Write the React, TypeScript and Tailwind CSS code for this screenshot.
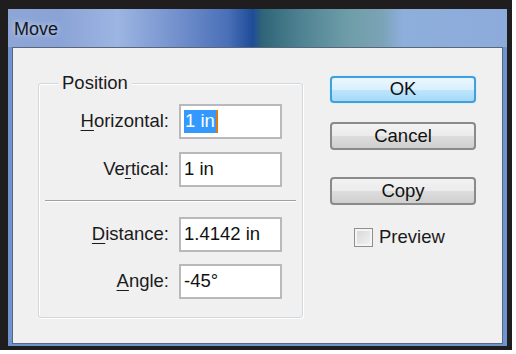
import React from "react";

const font = { fontFamily: '"Liberation Sans", Arial, sans-serif' };

function Mnemonic({ before, letter, after }: { before?: string; letter: string; after: string }) {
  return (
    <span>
      {before}
      <span className="underline underline-offset-[3px] decoration-1">{letter}</span>
      {after}
    </span>
  );
}

function Row({ label, children }: { label: React.ReactNode; children: React.ReactNode }) {
  return (
    <div className="flex items-center h-[35px]">
      <div className="w-[131px] text-right pr-[1px] text-[#1b1b1b]">{label}</div>
      <div className="ml-[9px] w-[103px] h-[35px] bg-white border-2 border-[#b9b9bd] flex items-center pl-[3px] text-[#111]">
        {children}
      </div>
    </div>
  );
}

function Button({ children, primary }: { children: React.ReactNode; primary?: boolean }) {
  return (
    <div
      className={
        primary
          ? "w-[146px] h-[27px] rounded-[4px] border-2 border-[#3da1dd] bg-[linear-gradient(#eaf6fd,#d9f0fc_50%,#bee6fd_51%,#a7d9f5)] flex items-center justify-center text-[#111] shadow-[0_0_1px_#7dd3fc]"
          : "w-[146px] h-[28px] rounded-[4px] border-2 border-[#8a8a8a] bg-[linear-gradient(#f2f2f2,#ebebeb_50%,#dddddd_51%,#cfcfcf)] flex items-center justify-center text-[#111]"
      }
    >
      {children}
    </div>
  );
}

export default function App() {
  return (
    <div className="w-[516px] h-[354px] bg-white text-[18.5px] leading-none" style={font}>
      <div className="w-[512px] h-[350px] bg-[#1f1d1d] pl-[8px] pt-[9px] pr-[5px] pb-[4px]">
        <div className="w-full h-full flex flex-col bg-[#6f93cf]">
          {/* title bar */}
          <div className="h-[38px] shrink-0 flex items-center pl-[6px] pt-[2px] bg-[linear-gradient(90deg,#8ea6d6_0%,#8aa3d6_10%,#9cb5e2_22%,#7390cc_34%,#4a70b8_44%,#1f4c98_49%,#2f6578_51%,#4c8090_58%,#6e9da8_68%,#7ba3b6_75%,#8eaedb_79%,#8cabdb_100%)]">
            <span className="text-[18px] text-[#141622] [text-shadow:0_0_6px_rgba(255,255,255,0.7)]">Move</span>
          </div>
          {/* body */}
          <div className="flex-1 mx-[4px] mb-[2px] bg-[#f0f0f0] border border-[#59677d] flex">
            {/* group box */}
            <div className="relative ml-[25px] mt-[35px] w-[265px] h-[235px] border border-[#d0d8de] rounded-[3px] shadow-[inset_1px_1px_0_#ffffff,1px_1px_0_#ffffff]">
              <div className="absolute left-[19px] -top-[10px] px-[4px] bg-[#f0f0f0] text-[#1b1b1b]">Position</div>
              <div className="flex flex-col pt-[20px]">
                <Row label={<Mnemonic letter="H" after="orizontal:" />}>
                  <span className="flex items-center h-[23px] bg-[#3399ff] text-white pl-[1px] pr-[1px]">1 in</span>
                  <span className="w-[2px] h-[23px] bg-[#e07b12]" />
                </Row>
                <div className="h-[13px]" />
                <Row label={<Mnemonic before="Ve" letter="r" after="tical:" />}>1 in</Row>
                <div className="mt-[13px] mx-[6px] h-[2px] border-t border-[#a0a0a0] border-b border-b-white" />
                <div className="h-[15px]" />
                <Row label={<Mnemonic letter="D" after="istance:" />}>1.4142 in</Row>
                <div className="h-[12px]" />
                <Row label={<Mnemonic letter="A" after="ngle:" />}>-45°</Row>
              </div>
            </div>
            {/* buttons */}
            <div className="ml-[27px] pt-[28px] flex flex-col">
              <Button primary>OK</Button>
              <div className="h-[19px]" />
              <Button>Cancel</Button>
              <div className="h-[27px]" />
              <Button>Copy</Button>
              <div className="mt-[23px] flex items-center pl-[24px]">
                <span className="w-[19px] h-[19px] border border-[#8e8f8f] bg-[linear-gradient(135deg,#d5d5d5,#f4f4f4)] shadow-[inset_0_0_0_2px_#f4f4f4]" />
                <span className="ml-[6px] text-[#1b1b1b]">Preview</span>
              </div>
            </div>
          </div>
        </div>
      </div>
    </div>
  );
}
